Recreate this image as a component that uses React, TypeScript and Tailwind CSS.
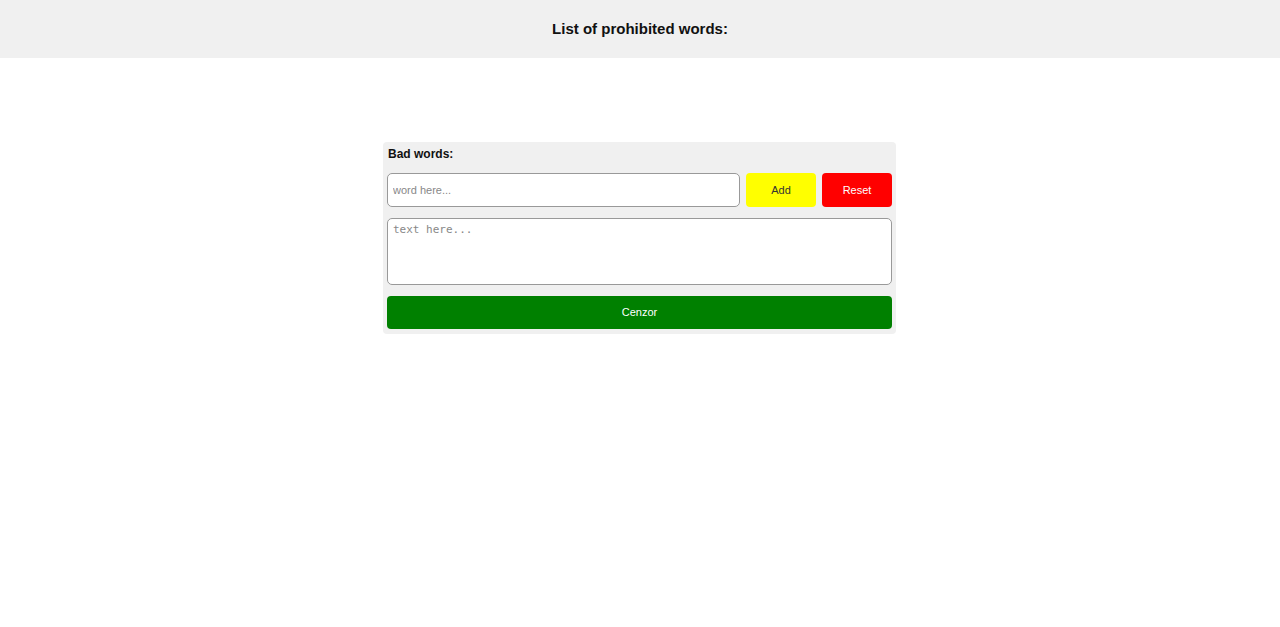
const App = () => {
  return (
    <div className="min-h-screen bg-white font-['Liberation_Sans',Arial,sans-serif] text-black">
      <header className="h-[58px] bg-[#f0f0f0] flex items-center justify-center">
        <h1 className="text-[15px] font-bold text-[#111]">List of prohibited words:</h1>
      </header>

      <main className="flex justify-center pt-[84px] pr-[1px]">
        <div className="w-[513px] bg-[#f0f0f0] rounded-[4px] px-[4px] pt-[5px] pb-[5px]">
          <div className="text-[12px] font-bold leading-[14px] h-[14px] ml-[1px] text-[#111]">Bad words:</div>
          <div className="flex gap-[6px] mt-[12px]">
            <input
              type="text"
              placeholder="word here..."
              className="flex-1 h-[34px] bg-white border border-[#999] rounded-[5px] px-[5px] text-[11px] placeholder:text-[#888] outline-none"
            />
            <button className="w-[70px] h-[34px] bg-[#ffff00] rounded-[4px] text-[11px] text-[#333]">Add</button>
            <button className="w-[70px] h-[34px] bg-[#ff0000] rounded-[4px] text-[11px] text-white">Reset</button>
          </div>
          <textarea
            placeholder="text here..."
            className="block w-full h-[67px] mt-[11px] bg-white border border-[#999] rounded-[5px] px-[5px] py-[3px] text-[11px] font-['DejaVu_Sans_Mono',monospace] placeholder:text-[#888] resize-none outline-none"
          />
          <button className="block w-full h-[33px] mt-[11px] bg-[#008000] rounded-[4px] text-[11px] text-white">Cenzor</button>
        </div>
      </main>
    </div>
  );
};

export default App;
